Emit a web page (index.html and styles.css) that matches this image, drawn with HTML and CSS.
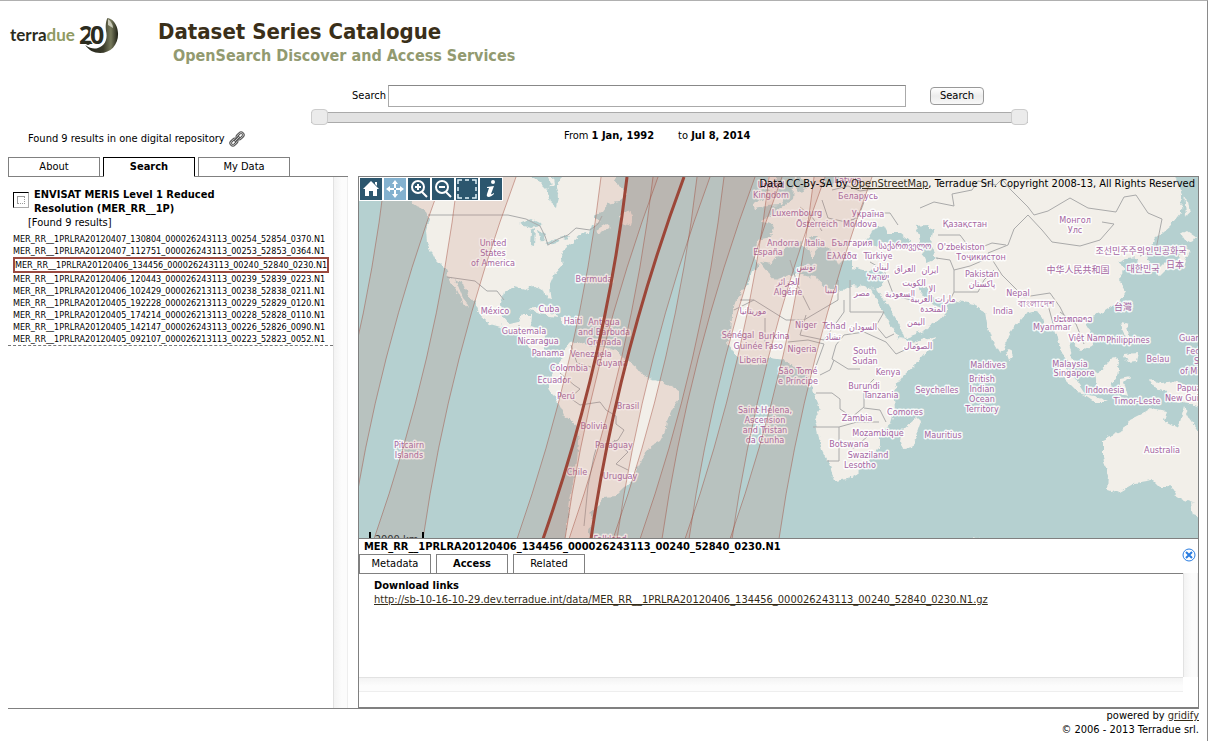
FILE: index.html
```html
<!DOCTYPE html>
<html lang="en">
<head>
<meta charset="utf-8">
<title>Dataset Series Catalogue</title>
<link rel="stylesheet" href="styles.css">
</head>
<body>
<div class="page">
  <header class="header">
    <svg class="logo" viewBox="8 15 122 42" role="img" aria-label="terradue 2.0">
      <defs>
        <linearGradient id="horn" x1="0" y1="0" x2="1" y2="0">
          <stop offset="0" stop-color="#23241a"/><stop offset=".55" stop-color="#3a3b2a"/><stop offset=".78" stop-color="#777a5c"/><stop offset="1" stop-color="#1d1e14"/>
        </linearGradient>
      </defs>
      <text class="logo-word" x="10" y="41">terra<tspan class="logo-due">due</tspan></text>
      <path d="M108 18C115 19 118 28 118 34C118 45 111 53 101 53C95 53 90 50 87 45C92 49 96 49 99 48C105 46 108 40 107 33C106 28 106 22 108 18z" transform="matrix(1.060 0 0 1 -7 0)" fill="url(#horn)"/>
      <path d="M108 19c3 2 5 6 5 9l-5-3z" fill="#c9cab9"/>
      <text class="logo-num" x="79" y="44">2</text>
      <circle cx="88" cy="43" r="2" fill="#2b2c1e"/>
      <text class="logo-num" x="90" y="44">0</text>
    </svg>
    <div class="titles">
      <h1 class="title">Dataset Series Catalogue</h1>
      <p class="subtitle">OpenSearch Discover and Access Services</p>
    </div>
  </header>

  <section class="query">
    <p class="found">Found 9 results in one digital repository
      <svg class="link-icon" viewBox="0 0 18 18" aria-hidden="true"><g transform="rotate(-45 9 9)" fill="none"><g stroke="#555" stroke-width="3"><rect x="0" y="6.500" width="8" height="5" rx="2.500"/><rect x="10" y="6.500" width="8" height="5" rx="2.500"/></g><g stroke="#ccc"><rect x="0" y="6.500" width="8" height="5" rx="2.500"/><rect x="10" y="6.500" width="8" height="5" rx="2.500"/></g><path d="M5 9h8" stroke="#555" stroke-width="3"/><path d="M5 9h8" stroke="#ccc"/></g></svg>
    </p>
    <form class="search">
      <div class="search-row">
        <label for="q">Search</label>
        <input class="search-box" id="q" type="text">
        <button class="search-btn" type="button">Search</button>
      </div>
      <div class="slider">
        <input type="range" min="0" max="100" value="0" aria-label="From date">
        <input type="range" min="0" max="100" value="100" aria-label="To date">
      </div>
      <p class="dates"><span>From <b>1 Jan, 1992</b></span><span>to <b>Jul 8, 2014</b></span></p>
    </form>
  </section>

  <main class="main">
    <aside class="sidebar">
      <nav class="tabs">
        <button class="tab" type="button">About</button>
        <button class="tab active" type="button">Search</button>
        <button class="tab" type="button">My Data</button>
      </nav>
      <div class="side-body">
        <div class="side-content">
          <div class="series">
            <input class="tick" type="checkbox" id="series">
            <label class="series-name" for="series">ENVISAT MERIS Level 1 Reduced Resolution (MER_RR__1P)</label>
          </div>
          <p class="series-count">[Found 9 results]</p>
          <ul class="results">
            <li>MER_RR__1PRLRA20120407_130804_000026243113_00254_52854_0370.N1</li>
            <li>MER_RR__1PRLRA20120407_112751_000026243113_00253_52853_0364.N1</li>
            <li class="selected">MER_RR__1PRLRA20120406_134456_000026243113_00240_52840_0230.N1</li>
            <li>MER_RR__1PRLRA20120406_120443_000026243113_00239_52839_0223.N1</li>
            <li>MER_RR__1PRLRA20120406_102429_000026213113_00238_52838_0211.N1</li>
            <li>MER_RR__1PRLRA20120405_192228_000026213113_00229_52829_0120.N1</li>
            <li>MER_RR__1PRLRA20120405_174214_000026213113_00228_52828_0110.N1</li>
            <li>MER_RR__1PRLRA20120405_142147_000026243113_00226_52826_0090.N1</li>
            <li>MER_RR__1PRLRA20120405_092107_000026213113_00223_52823_0052.N1</li>
          </ul>
        </div>
        <div class="track-v"></div>
      </div>
    </aside>

    <section class="viewer">
      <div class="map">
        <svg class="map-svg" viewBox="359 177 839 362" preserveAspectRatio="xMinYMin slice" role="img" aria-label="World map with dataset footprints">
          <defs>
            <filter id="coast" x="0" y="0" width="1" height="1"><feTurbulence type="fractalNoise" baseFrequency=".15" numOctaves="3" seed="4"/><feDisplacementMap in="SourceGraphic" scale="6" xChannelSelector="R" yChannelSelector="G"/></filter>
          </defs>
          <g filter="url(#coast)">
            <rect class="water" x="340" y="160" width="880" height="400"/>
            <g class="land">
              <path d="M400 165L404 192 414 204 426 212 429 218 426 230 427 243 434 258 446 270 451 281 457 290 463 302 469 309 466 300 459 287 455 279 462 283 470 296 477 307 480 316 490 324 504 328 516 334 526 341 532 351 544 358 556 355 563 360 555 370 548 380 550 391 558 402 564 415 577 426 579 442 577 460 573 482 569 508 566 530 564 550 594 550 588 530 593 520 590 512 601 504 602 497 616 496 624 488 633 480 637 470 642 460 646 450 653 445 660 441 665 432 667 422 672 410 679 400 679 390 668 384 652 380 644 377 637 368 625 359 616 351 605 347 590 346 578 341 570 343 563 351 552 354 545 348 543 330 531 326 532 314 523 314 518 322 510 324 503 316 501 304 504 292 514 287 525 290 533 286 543 289 547 299 551 300 549 287 555 273 563 264 561 253 567 247 572 243 582 234 590 232 592 226 600 222 594 215 603 211 608 204 618 202 628 194 618 185 610 165z"/>
              <path d="M596 230l10-6 4 3-12 7zM620 216l8-8 4 8-2 10-8-3zM528 309l12-2 14 7 4 4-8-1-14-5zM560 318l12 0 6 5-16 0zM430 209l7 10-5-1z"/>
              <path d="M753 204l10-6 6-8 0-14 6 0 2 14 7 10-3 5-14 1-12 3z"/>
              <path d="M757 240l14-3 3-11-12-5 9-5 6-6 16-11 2-24H1175L1182 194 1181 212 1170 226 1155 239 1146 254 1151 268 1143 273 1137 258 1126 259 1117 263 1125 269 1119 279 1126 291 1120 301 1105 311 1090 317 1086 325 1094 338 1092 346 1081 351 1074 342 1068 342 1070 352 1074 362 1070 364 1062 354 1058 338 1054 330 1045 329 1042 318 1036 311 1025 314 1014 327 1008 336 1004 350 999 352 992 340 987 324 985 312 974 304 957 301 946 303 948 309 940 319 924 331 903 339 912 342 936 336 930 348 916 364 903 376 893 390 895 410 891 424 880 433 880 446 873 453 868 463 858 473 848 479 834 481 830 466 822 450 818 434 815 420 820 409 815 397 813 388 807 375 795 368 785 360 770 358 757 365 745 364 734 352 727 342 731 334 732 316 736 299 747 285 752 271 760 264 755 259z"/>
              <path d="M903 430l14-13 4 4-9 27-9 2-3-10zM1006 351l4-2 3 8-4 2zM1184 190l3 4 3 20-4 2zM1181 234l6-3 10 7-10 5zM1184 244l5 8-6 12-14 3-8 8-5-3 8-8 14-4zM1121 322l6 2 2 12 6 8-10-4zM1124 354l14-1-2 8-8 1zM1056 362l8 4 14 16 8 12-8-2-14-14zM1082 394l12 2 14 6-14 0zM1095 373l6-2 12-14 6 4-2 16-8 12-12-2zM1120 378l10-2-6 6 4 14-8-2zM1150 380l12 3 12-2 30 10v18l-14-6-16-2-4-8-14-4zM1103 440l18-8 8-12 12-6 8-5 18 3-3 9 14 7 6-21 6 12 12 17v70l-18-6-8-5-6-10-8 4-9-9-18 3-18 10-10-3 1-14-5-18zM1190 503l12 2-3 12-6-2zM974 536l5 2-3 4z"/>
            </g>
            <g class="water">
              <path d="M552 170l2 14-7 6 3 11 7 6 2-10-3-8 10-19zM524 170l15 12 8 8 5-6-6-14zM518 224l13-5 12 6-12 3zM531 231l4-2-1 17-4-1zM538 229l8 5-2 9-4-3zM544 244l14-6 2 3-14 4zM560 238l10-2-4 4zM457 283l12 15 10 16-6-4-10-12z"/>
              <path d="M760 262l10 2 8-10 10-9 11-4 9 8 4 10 6-8-8-14 6 0 10 10 10 10 4 8 4-9 8 2 0 10 12 3 18-1 4 8-4 9-14 1-14-3-12 7-14-3-12-11-13-4-14 1-14 5z"/>
              <path d="M866 240l6-10 12-5 4 8 12 0 10 8-10 5-14-3-12 3zM915 226l12-1 6 6-2 14 6 14-10 4-6-14-2-14zM870 288l6 0 12 18 12 20 5 13-6-1-10-16-12-20zM915 284l8 0 10 14 12 4-4 6-12-6zM792 183l8-6 8 8-6 8zM826 170l-2 15 12-2 14-13zM1174 170l10 26 24 34v-60z"/>
            </g>
          </g>
          <path class="borders" d="M428 215h80l18 4 14 7 5 10 3 9 10-6 10-4 8-7 14 2 8-6 4-8M447 277l28 4 12 10 10 0 7 9M519 325v9h8M571 345l6 18 14 4M560 373l14 12 6 4-10 9 10 7 20-3 6 8 10 6v8l8 6-6 10-12 5-8-3-4 14-6 30-4 40M614 440l14 12-12 12 12 6"/>
          <path class="borders" d="M740 300h14l32 20h18l34-20v-20M754 300l-20 10M790 260l8 26 12 24M765 318v24M806 315l-6 20 24 5 20-28v-12M850 280v32h34M884 312l-8 14 10 12 8-4M836 345l8-10 20-3 22 10 10 12 22-10M836 345l-4 14 16 10 12 0M788 342l20-2 16 4-8 22M820 375l10-5 4-10M816 393h16l8 6v10l12 8 12-10 0-18 10-10M813 427h26l18-5 22 0M839 427v34l-12 0M840 445l14 3 14-12M864 408l16 2 6 12M800 207l12 10 10 14M822 200l6 18 18 4 12-4 6-16M832 190l16-4 12 5 20-3M846 222l22-9 22 0 8 12"/>
          <path class="borders" d="M920 208l14-6 20 4-2-12 20-4 6-9 18 4 6-6 8 10 18 18 6 8 14-4 22-13 18 10 28 4 8-15 12-2 12 18 14 6-6 30M1028 215l14 15 10 12 28 4 20-6 14-16-12-2M1028 215l-14 14-6 16-20 8 14 22 22 22 26-4 10 14 6 12M938 235l22 0 12 16 20-8 14 2M936 258l14 2 4 10 16-4 14-6M954 270v22l-4 8M954 292l24 0 6-12 10-10M1048 305l6 22M1060 312l16 12 8 20M870 262l14 8 10 26 18 4M1140 256l10-4"/>
          <g class="labels">
            <text x="493" y="246">United<tspan x="493" dy="10">States</tspan><tspan x="493" dy="10">of America</tspan></text>
            <text x="594" y="282">Bermuda</text><text x="495" y="314">México</text><text x="549" y="312">Cuba</text><text x="573" y="324">Haiti</text>
            <text x="604" y="325">Antigua<tspan x="604" dy="10">and Barbuda</tspan><tspan x="604" dy="10">Grenada</tspan></text>
            <text x="524" y="334">Guatemala</text><text x="538" y="344">Nicaragua</text><text x="548" y="356">Panama</text><text x="591" y="357">Venezuela</text><text x="612" y="366">Guyana</text><text x="569" y="371">Colombia</text><text x="554" y="383">Ecuador</text><text x="566" y="399">Perú</text><text x="628" y="409">Brasil</text><text x="594" y="429">Bolivia</text><text x="614" y="448">Paraguay</text><text x="577" y="475">Chile</text><text x="620" y="479">Uruguay</text>
            <text x="409" y="448">Pitcairn<tspan x="409" dy="10">Islands</tspan></text>
            <text x="610" y="542">Falkland</text>
            <text x="771" y="188">United<tspan x="771" dy="10">Kingdom</tspan></text>
            <text x="848" y="183">Latvija</text><text x="858" y="199">Беларусь</text><text x="797" y="216">Luxembourg</text><text x="868" y="217">Україна</text><text x="817" y="227">Österreich</text><text x="860" y="227">Moldova</text><text x="783" y="246">Andorra</text><text x="815" y="246">Italia</text><text x="852" y="246">България</text><text x="768" y="255">España</text><text x="842" y="259">Ελλάδα</text><text x="878" y="259">Türkiye</text><text x="905" y="249">საქართველო</text>
            <text x="806" y="270">تونس</text><text x="881" y="270">لبنان</text><text x="878" y="280">ישראל</text><text x="905" y="272">العراق</text><text x="930" y="273">ایران</text><text x="788" y="285">الجزائر</text><text x="788" y="295">Algérie</text><text x="831" y="293">ليبيا</text><text x="862" y="296">مصر</text><text x="914" y="286">الكويت</text><text x="900" y="297">السعودية</text><text x="932" y="292">الإ</text><text x="933" y="302">مارات العربية</text><text x="933" y="312">المتحدة</text><text x="753" y="314">موريتانيا</text><text x="863" y="330">السودان</text><text x="833" y="340">تشاد</text><text x="916" y="325">اليمن</text><text x="918" y="349">الصومال</text>
            <text x="806" y="328">Niger</text><text x="834" y="329">Tchad</text><text x="738" y="338">Sénégal</text><text x="774" y="339">Burkina<tspan x="774" dy="10">Faso</tspan></text><text x="748" y="349">Guinée</text><text x="802" y="352">Nigeria</text><text x="865" y="354">South<tspan x="865" dy="10">Sudan</tspan></text><text x="753" y="363">Liberia</text><text x="798" y="374">São Tomé<tspan x="798" dy="10">e Príncipe</tspan></text>
            <text x="888" y="375">Kenya</text><text x="864" y="389">Burundi</text><text x="881" y="398">Tanzania</text><text x="937" y="393">Seychelles</text><text x="857" y="421">Zambia</text><text x="905" y="415">Comores</text><text x="878" y="436">Mozambique</text><text x="849" y="447">Botswana</text><text x="868" y="458">Swaziland</text><text x="860" y="468">Lesotho</text><text x="943" y="438">Mauritius</text>
            <text x="765" y="413">Saint Helena,<tspan x="765" dy="10">Ascension</tspan><tspan x="765" dy="10">and Tristan</tspan><tspan x="765" dy="10">da Cunha</tspan></text>
            <text x="965" y="227">Қазақстан</text><text x="1075" y="223">Монгол<tspan x="1075" dy="10">Улс</tspan></text><text x="961" y="250">O'zbekiston</text><text x="981" y="260">Тоҷикистон</text><text x="982" y="277">Pakistan</text><text x="982" y="287">پاکستان</text><text x="1018" y="296">Nepal</text><text x="1036" y="307">বাংলাদেশ</text><text x="1003" y="314">India</text><text x="1073" y="322">ປະເທດລາວ</text><text x="1052" y="330">Myanmar</text><text x="1087" y="341">Việt Nam</text><text x="1128" y="343">Philippines</text><text x="1158" y="362">Belau</text><text x="988" y="368">Maldives</text><text x="1070" y="367">Malaysia<tspan x="1074" dy="9">Singapore</tspan></text>
            <text x="982" y="382">British<tspan x="982" dy="10">Indian</tspan><tspan x="982" dy="10">Ocean</tspan><tspan x="982" dy="10">Territory</tspan></text>
            <text x="1105" y="393">Indonesia</text><text x="1137" y="404">Timor-Leste</text><text x="1162" y="453">Australia</text>
            <g class="start"><text x="1179" y="341">Guam</text><text x="1186" y="354">Fed.</text><text x="1194" y="364">St</text><text x="1180" y="374">of Mic.</text><text x="1177" y="391">Papua</text><text x="1165" y="401">New Guinea</text></g>
            <g class="cjk"><text x="1078" y="273">中华人民共和国</text><text x="1141" y="254">조선민주주의인민공화국</text><text x="1143" y="272">대한민국</text><text x="1175" y="268">日本</text><text x="1123" y="310">台灣</text></g>
          </g>
          <g class="swath-fill">
            <path d="M385 177q-21 181-84 362H350q26-181 93-362z"/>
            <path d="M458 177q-21 181-84 362H423q26-181 93-362z"/>
            <path d="M601 177q-21 181-84 362H565q26-181 93-362z"/>
            <path d="M627 177q-21 181-84 362H591q26-181 93-362z"/>
            <path d="M653 177q-21 181-84 362H617q26-181 93-362z"/>
            <path d="M697 177q-21 181-84 362H662q26-181 93-362z"/>
            <path d="M724 177q-21 181-84 362H689q26-181 93-362z"/>
            <path d="M769 177q-21 181-84 362H732q26-181 93-362z"/>
            <path d="M814 177q-21 181-84 362H779q26-181 93-362z"/>
          </g>
          <path class="swath-line" d="M385 177q-21 181-84 362M443 177q-67 181-93 362M458 177q-21 181-84 362M516 177q-67 181-93 362M601 177q-21 181-84 362M658 177q-67 181-93 362M653 177q-21 181-84 362M710 177q-67 181-93 362M697 177q-21 181-84 362M755 177q-67 181-93 362M724 177q-21 181-84 362M782 177q-67 181-93 362M769 177q-21 181-84 362M825 177q-67 181-93 362M814 177q-21 181-84 362M872 177q-67 181-93 362"/>
          <path class="swath-selected" d="M627 177q-21 181-84 362M684 177q-67 181-93 362"/>
        </svg>

        <div class="tools">
          <button class="tool" type="button" aria-label="Home"><svg viewBox="0 0 22 22"><path d="M11 3l8 8h-2v7h-4v-5H9v5H5v-7H3zM15 4h2v4l-2-2z" fill="#fff"/></svg></button>
          <button class="tool on" type="button" aria-label="Pan"><svg viewBox="0 0 22 22"><path d="M11 4v14M4 11h14" stroke="#fff" stroke-width="2" stroke-dasharray="6 2"/><path d="M11 2l3 4H8zM11 20l3-4H8zM2 11l4-3v6zM20 11l-4-3v6z" fill="#fff"/></svg></button>
          <button class="tool" type="button" aria-label="Zoom in"><svg viewBox="0 0 22 22" fill="none" stroke="#fff" stroke-width="2"><circle cx="10" cy="9" r="6"/><path d="M14 14l5 5M7 9h6M10 6v6"/></svg></button>
          <button class="tool" type="button" aria-label="Zoom out"><svg viewBox="0 0 22 22" fill="none" stroke="#fff" stroke-width="2"><circle cx="10" cy="9" r="6"/><path d="M14 14l5 5M7 9h6"/></svg></button>
          <button class="tool" type="button" aria-label="Select area"><svg viewBox="0 0 22 22" fill="none" stroke="#e2f3fa" stroke-width="1.500"><path d="M2 6V2h4M9 2h4M16 2h4v4M20 9v4M20 16v4h-4M13 20H9M6 20H2v-4M2 13V9"/></svg></button>
          <button class="tool" type="button" aria-label="Information"><svg viewBox="0 0 22 22" fill="#fff"><circle cx="13" cy="4" r="2"/><path d="M7 9l7-1-3 8q0 1 3-1v1q-3 3-5 3-3 0-2-3l2-6H7z"/></svg></button>
        </div>
        <p class="credit">Data CC-By-SA by <a href="#osm">OpenStreetMap</a>, Terradue Srl. Copyright 2008-13, All Rights Reserved</p>
        <div class="scale">2000 km</div>
      </div>

      <div class="details">
        <div class="details-head">
          <div>
            <h2 class="details-title">MER_RR__1PRLRA20120406_134456_000026243113_00240_52840_0230.N1</h2>
            <nav class="tabs small">
              <button class="tab" type="button">Metadata</button>
              <button class="tab active" type="button">Access</button>
              <button class="tab" type="button">Related</button>
            </nav>
          </div>
          <button class="close" type="button" aria-label="Close"><svg viewBox="0 0 14 14" fill="none" stroke="#2a7de1"><circle cx="7" cy="7" r="6"/><path d="M4 4l6 6M10 4l-6 6" stroke-width="2"/></svg></button>
        </div>
        <div class="details-body">
          <div class="downloads">
            <h3>Download links</h3>
            <a href="#download">http://sb-10-16-10-29.dev.terradue.int/data/MER_RR__1PRLRA20120406_134456_000026243113_00240_52840_0230.N1.gz</a>
          </div>
          <div class="track-v"></div>
        </div>
        <div class="track-h"></div>
      </div>
    </section>
  </main>

  <footer class="footer">
    <p>powered by <a href="#gridify">gridify</a></p>
    <p>© 2006 - 2013 Terradue srl.</p>
  </footer>
</div>
</body>
</html>
```
FILE: styles.css
```css
* { box-sizing: border-box; }
body { margin: 0; background: #fff; color: #000; font: 11px/14px "DejaVu Sans Condensed", "Noto Sans", sans-serif; }
h1, h2, h3, p, ul { margin: 0; padding: 0; }
button, input { font: inherit; color: inherit; }
a { color: #332b17; }
.page { min-height: 100vh; display: flex; flex-direction: column; border-top: 1px solid #b0b0b0; border-right: 1px solid #8a8a8a; padding: 0 8px 4px; }

.header { display: flex; gap: 28px; padding-top: 14px; height: 84px; }
.logo { width: 122px; height: 42px; flex: none; }
.logo-word { font: bold 17px Lato, sans-serif; fill: #2b2c1e; }
.logo-due { fill: #8f9a63; }
.logo-num { font: bold 25px "Open Sans", sans-serif; fill: #2b2c1e; stroke: #fff; stroke-width: 2px; paint-order: stroke; }
.titles { padding-top: 3px; }
.title { font-size: 22px; line-height: 28px; color: #3a2f19; }
.subtitle { font-size: 16px; line-height: 20px; font-weight: bold; color: #929a70; padding-left: 15px; }

.query { display: grid; grid-template-columns: 303px 717px; height: 72px; }
.found { align-self: end; padding: 0 0 10px 20px; display: flex; align-items: center; gap: 4px; white-space: nowrap; }
.link-icon { width: 16px; height: 16px; }
.search-row { display: flex; align-items: center; padding-left: 41px; gap: 2px; }
.search-box { width: 518px; height: 22px; border: 1px solid #aaa; border-top-color: #888; background: #fff; }
.search-btn { margin-left: 22px; width: 54px; height: 18px; padding: 0; border: 1px solid #999; border-radius: 4px; background: linear-gradient(#fff, #ececec 50%, #f8f8f8); }
.slider { display: grid; height: 18px; margin-top: 1px; align-items: center; background: linear-gradient(#aaa 0 1px, #e2e2e2 1px 10px, #aaa 10px) center / 100% 11px no-repeat; }
.slider input { grid-area: 1 / 1; appearance: none; width: 100%; height: 18px; margin: 0; background: none; pointer-events: none; }
.slider input::-webkit-slider-thumb { appearance: none; width: 17px; height: 16px; border: 1px solid #ccc; border-radius: 4px; background: #ebebeb; pointer-events: auto; }
.dates { display: flex; gap: 24px; padding: 3px 0 0 253px; }

.main { flex: 1; display: grid; grid-template-columns: 340px minmax(0, 1fr); column-gap: 10px; border-bottom: 1px solid #808080; }
.sidebar { display: flex; flex-direction: column; }
.tabs { display: flex; gap: 3px; height: 20px; box-shadow: inset 0 -1px #808080; }
.tab { width: 92px; height: 20px; padding: 0; border: 1px solid #808080; background: #fff; }
.tab.active { font-weight: bold; border-color: #000; border-bottom-color: #fff; }
.side-body { flex: 1; display: flex; }
.side-content { flex: 1; min-width: 0; padding-top: 11px; }
.track-v { flex: none; width: 15px; border-left: 1px solid #e2e2e2; border-right: 1px solid #eee; background: linear-gradient(90deg, #f3f3f3, #fcfcfc 60%); }
.series { display: flex; gap: 5px; padding-left: 5px; }
.tick { appearance: none; flex: none; width: 16px; height: 16px; margin: 4px 0 0; border: 1px solid #aaa; border-top-color: #000; border-left-color: #000; display: grid; place-items: center; }
.tick::before { content: ""; width: 6px; height: 6px; border: 1px dotted #999; border-top-style: solid; border-left-style: solid; }
.series-name { font-weight: bold; width: 200px; }
.series-count { padding-left: 20px; }
.results { list-style: none; font-size: 9px; line-height: 12px; padding: 3px 4px 0 5px; border-bottom: 1px dashed #777; white-space: nowrap; }
.results .selected { border: 2px solid #9b4a40; }

.viewer { margin-top: 19px; border: 1px solid #808080; display: flex; flex-direction: column; }
.map { position: relative; flex: 1; min-height: 200px; overflow: hidden; background: #b5d0d0; border-bottom: 1px solid #808080; }
.map-svg { position: absolute; inset: 0; width: 100%; height: 100%; }
.water { fill: #b5d0d0; }
.land { fill: #f2efe9; }
.borders { fill: none; stroke: #aaa; stroke-linejoin: round; }
.labels { font: 9px "DejaVu Sans Condensed", "DejaVu Sans", "Noto Sans", sans-serif; fill: #a566a2; text-anchor: middle; stroke: rgba(255, 255, 255, .85); stroke-width: 3px; stroke-linejoin: round; paint-order: stroke; }
.start { text-anchor: start; }
.cjk { font-family: "Noto Sans CJK SC", sans-serif; }
.swath-fill { fill: rgba(194, 132, 115, .19); }
.swath-line { fill: none; stroke: rgba(160, 70, 55, .45); }
.swath-selected { fill: none; stroke: #9c4638; stroke-width: 3px; }
.tools { position: absolute; top: 0; left: 0; display: flex; }
.tool { width: 24px; height: 24px; padding: 0; border: 1px solid #fff; background: #2c566e; }
.tool.on { background: #83b1cf; }
.tool svg { display: block; width: 22px; height: 22px; }
.credit { position: absolute; top: 0; right: 3px; white-space: nowrap; }
.scale { position: absolute; left: 10px; bottom: -10px; width: 55px; height: 16px; padding-top: 1px; border: 2px solid #000; border-width: 0 2px; text-align: center; color: #333; }

.details { height: 168px; display: flex; flex-direction: column; }
.details-head { display: flex; justify-content: space-between; align-items: flex-start; height: 34px; }
.details-title { font-size: 11px; line-height: 15px; padding-left: 5px; }
.small { gap: 5px; }
.small .tab { width: 72px; }
.small .tab.active { border-color: #808080; border-bottom-color: #fff; }
.close { width: 14px; height: 14px; padding: 0; margin: 9px 2px 0 0; border: 0; background: none; }
.close svg { display: block; }
.details-body { display: flex; height: 104px; }
.downloads { flex: 1; border-top: 1px solid #808080; padding: 5px 0 0 15px; }
.downloads h3 { font-size: 11px; line-height: 14px; }
.track-h { height: 15px; margin-right: 15px; border-top: 1px solid #e2e2e2; border-bottom: 1px solid #eee; background: linear-gradient(#f3f3f3, #fcfcfc 60%); }
.footer { text-align: right; }
```
